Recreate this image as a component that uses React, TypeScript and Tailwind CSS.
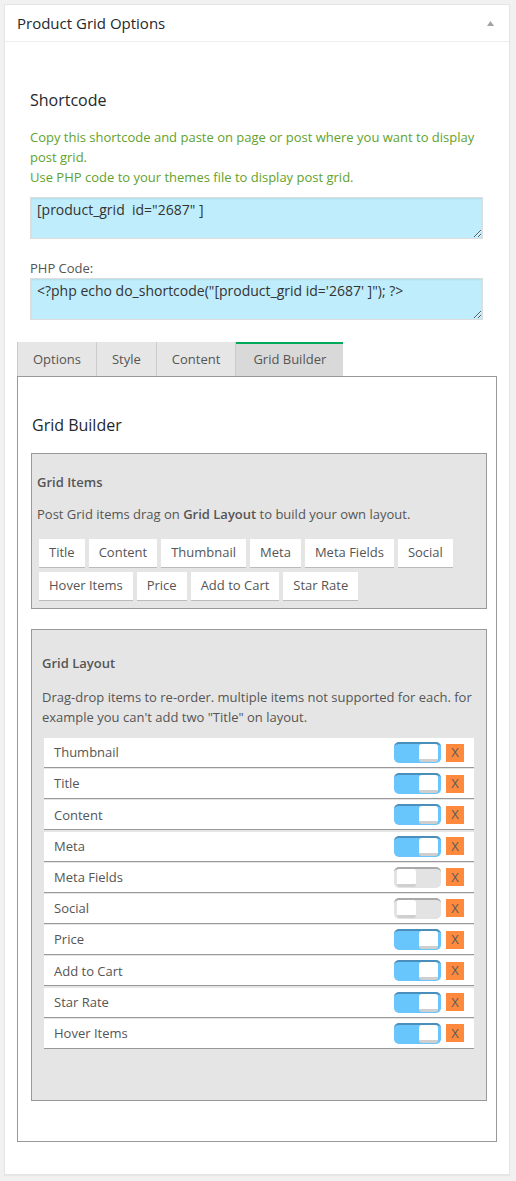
import React from 'react';

const gridItems = [
  'Title',
  'Content',
  'Thumbnail',
  'Meta',
  'Meta Fields',
  'Social',
  'Hover Items',
  'Price',
  'Add to Cart',
  'Star Rate',
];

const layoutRows: { name: string; on: boolean }[] = [
  { name: 'Thumbnail', on: true },
  { name: 'Title', on: true },
  { name: 'Content', on: true },
  { name: 'Meta', on: true },
  { name: 'Meta Fields', on: false },
  { name: 'Social', on: false },
  { name: 'Price', on: true },
  { name: 'Add to Cart', on: true },
  { name: 'Star Rate', on: true },
  { name: 'Hover Items', on: true },
];

const tabs = ['Options', 'Style', 'Content', 'Grid Builder'];

function Toggle({ on }: { on: boolean }) {
  return (
    <div
      className={
        on
          ? 'flex h-[21px] w-[47px] items-start justify-end rounded-[5px] border-t-2 border-[#4a8fbc] bg-[#69c6fd] pr-[3px]'
          : 'flex h-[21px] w-[47px] items-start justify-start rounded-[5px] border-t-2 border-[#a9a9a9] bg-[#e3e3e3] pl-[3px]'
      }
    >
      <div className="h-[18px] w-[19px] rounded-[3px] border-b-[3px] border-[#cfcfcf] bg-white" />
    </div>
  );
}

export default function App() {
  return (
    <div className="min-h-[1181px] bg-[#f1f1f1] pl-[4px] pt-[4px] font-['Open_Sans',sans-serif] text-[13px] text-[#555]">
      <div className="w-[506px] border border-[#e5e5e5] bg-white shadow-[0_1px_1px_rgba(0,0,0,0.04)]">
        {/* header */}
        <div className="flex h-[37px] items-center border-b border-[#eee] pl-[12px] pr-[15px]">
          <span className="text-[15px] text-[#23282d]">Product Grid Options</span>
          <svg className="ml-auto" width="7" height="5" viewBox="0 0 7 5">
            <path d="M3.5 0L7 5H0z" fill="#a0a5aa" />
          </svg>
        </div>

        <div className="px-[12px] pb-[32px]">
          {/* shortcode */}
          <div className="pl-[13px] pr-[14px] pt-[47px]">
            <h3 className="text-[16px] leading-[22px] text-[#23282d]">Shortcode</h3>
            <p className="mt-[16px] leading-[20px] text-[#62a22c]">
              Copy this shortcode and paste on page or post where you want to display post grid.
              <br />
              Use PHP code to your themes file to display post grid.
            </p>
            <textarea
              readOnly
              value={'[product_grid  id="2687" ]'}
              className="mt-[10px] block h-[42px] w-full border border-[#ddd] bg-[#bfedfb] px-[6px] py-[2px] font-['Open_Sans',sans-serif] text-[14px] leading-[20px] text-[#333] shadow-[inset_0_1px_2px_rgba(0,0,0,0.07)] outline-none"
            />
            <div className="mb-[1px] mt-[20px] leading-[18px]">PHP Code:</div>
            <textarea
              readOnly
              value={`<?php echo do_shortcode("[product_grid id='2687' ]"); ?>`}
              className="block h-[42px] w-full border border-[#ddd] bg-[#bfedfb] px-[6px] py-[2px] font-['Open_Sans',sans-serif] text-[14px] leading-[20px] text-[#333] shadow-[inset_0_1px_2px_rgba(0,0,0,0.07)] outline-none"
            />
          </div>

          {/* tabs */}
          <div className="mt-[22px] flex h-[34px]">
            {tabs.map((t, i) => {
              const active = t === 'Grid Builder';
              return (
                <div
                  key={t}
                  className={
                    active
                      ? 'flex items-center border-t-2 border-[#00a85a] bg-[#d9d9d9] px-[17px] pb-[1px] text-[#555]'
                      : i === 0
                        ? 'flex items-center border-l border-r border-[#ccc] bg-[#e6e6e6] px-[15px] pt-[1px] text-[#555]'
                        : 'flex items-center border-r border-[#ccc] bg-[#e6e6e6] px-[15px] pt-[1px] text-[#555]'
                  }
                >
                  {t}
                </div>
              );
            })}
          </div>

          <div className="border border-[#999] pb-[40px] pt-[37px]">
            <h3 className="pl-[14px] text-[16px] leading-[22px] text-[#23282d]">Grid Builder</h3>

            {/* grid items */}
            <div className="ml-[13px] mr-[9px] mt-[17px] border border-[#999] bg-[#e5e5e5] px-[5px] pb-[5px] pt-[18px]">
              <div className="font-semibold leading-[20px]">Grid Items</div>
              <p className="mt-[12px] leading-[20px]">
                Post Grid items drag on <b className="font-semibold">Grid Layout</b> to build your own layout.
              </p>
              <div className="mt-[13px] flex flex-wrap">
                {gridItems.map((g) => (
                  <div
                    key={g}
                    className="m-[2px] flex h-[29px] items-center border-b border-[#bbb] bg-white px-[10px]"
                  >
                    {g}
                  </div>
                ))}
              </div>
            </div>

            {/* grid layout */}
            <div className="ml-[13px] mr-[9px] mt-[20px] border border-[#999] bg-[#e5e5e5] px-[10px] pb-[51px] pt-[23px]">
              <div className="font-semibold leading-[20px]">Grid Layout</div>
              <p className="mt-[14px] leading-[20px]">
                Drag-drop items to re-order. multiple items not supported for each. for example you can't add two
                "Title" on layout.
              </p>
              <div className="mx-[2px] mt-[11px] flex flex-col gap-[1.2px]">
                {layoutRows.map((r) => (
                  <div
                    key={r.name}
                    className="flex h-[30px] items-center border-b border-[#999] bg-white pl-[10px] pr-[10px]"
                  >
                    <span className="flex-1 pt-[1px]">{r.name}</span>
                    <Toggle on={r.on} />
                    <div className="ml-[5px] flex h-[18px] w-[18px] items-center justify-center bg-[#ff8a3d] text-[13px] leading-none text-[#5a5a5a]">
                      X
                    </div>
                  </div>
                ))}
              </div>
            </div>
          </div>
        </div>
      </div>
    </div>
  );
}
